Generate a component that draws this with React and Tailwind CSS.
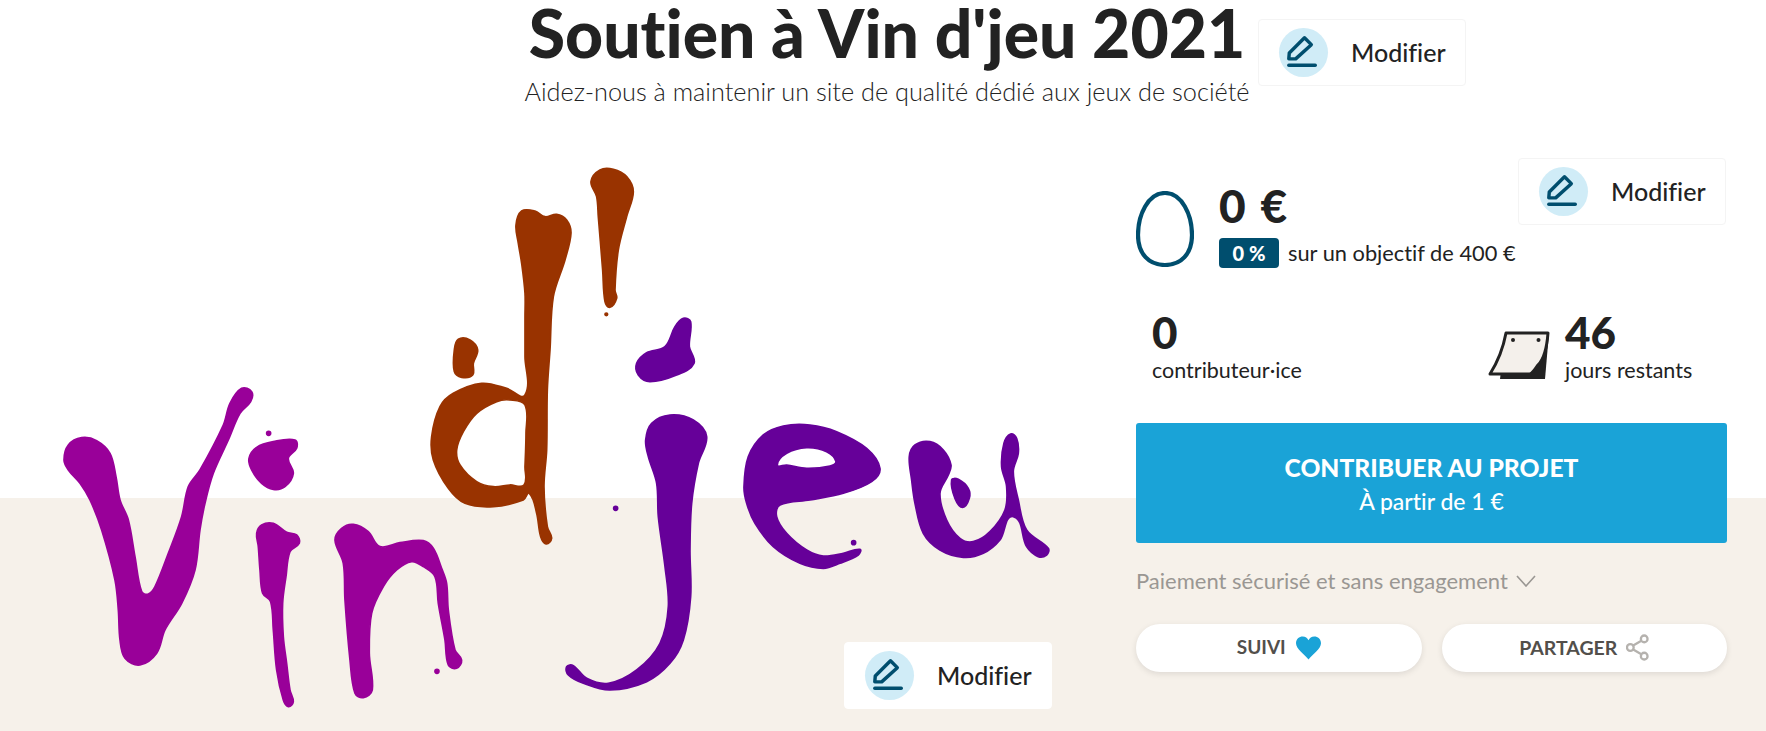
import React from 'react'

// closed smooth outline through a list of traced points
const smooth = (pts) => {
  const n = pts.length
  const tangent = (i) => {
    const a = pts[(i - 1 + n) % n]
    const b = pts[(i + 1) % n]
    const len = Math.hypot(b[0] - a[0], b[1] - a[1]) || 1
    return [(b[0] - a[0]) / len, (b[1] - a[1]) / len]
  }
  let d = `M${pts[0][0]} ${pts[0][1]}`
  for (let i = 0; i < n; i++) {
    const p1 = pts[i]
    const p2 = pts[(i + 1) % n]
    const t1 = tangent(i)
    const t2 = tangent((i + 1) % n)
    const h = Math.hypot(p2[0] - p1[0], p2[1] - p1[1]) / 3
    d += `C${(p1[0] + t1[0] * h).toFixed(1)} ${(p1[1] + t1[1] * h).toFixed(1)} ${(p2[0] - t2[0] * h).toFixed(1)} ${(p2[1] - t2[1] * h).toFixed(1)} ${p2[0]} ${p2[1]}`
  }
  return d + 'Z'
}

const letterV = [[72,270],[85,225],[125,203],[170,212],[210,250],[228,320],[240,390],[265,450],[285,560],[305,665],[325,672],[345,650],[385,550],[425,440],[445,350],[480,300],[550,165],[570,100],[605,55],[635,65],[632,95],[600,130],[565,210],[520,310],[495,400],[480,480],[465,600],[425,700],[375,780],[350,850],[300,885],[255,865],[240,810],[235,720],[225,630],[185,480],[150,390],[120,340],[85,300]]
const dotI = [[627,265],[650,232],[700,215],[765,210],[770,235],[745,265],[760,310],[735,350],[700,358],[665,340],[635,300]]
const letterI = [[650,490],[665,465],[700,460],[740,487],[770,495],[778,520],[750,545],[738,620],[728,700],[730,800],[740,880],[750,960],[760,995],[745,1010],[730,990],[710,900],[700,780],[692,695],[668,670],[660,600],[655,530]]
const letterN = [[885,510],[905,475],[940,463],[985,485],[1020,530],[1080,518],[1150,512],[1180,535],[1205,595],[1220,640],[1225,720],[1245,840],[1265,870],[1250,895],[1225,885],[1215,810],[1195,700],[1185,620],[1150,590],[1115,575],[1070,600],[1030,650],[995,730],[988,850],[997,960],[970,983],[945,970],[930,870],[915,690],[910,580]]

const apostrophe = [[543,95],[570,60],[610,58],[650,80],[670,125],[650,200],[625,300],[615,420],[620,445],[600,472],[585,455],[578,360],[565,200],[560,140]]
const letterD = [[318,225],[335,183],[375,183],[405,200],[440,193],[470,210],[483,250],[465,330],[430,440],[420,600],[412,720],[410,900],[402,1010],[412,1130],[425,1165],[408,1182],[392,1160],[380,1090],[358,1030],[340,1050],[250,1070],[165,1060],[115,1015],[70,930],[65,860],[90,770],[130,730],[215,700],[290,715],[345,735],[345,620],[345,500],[345,430],[335,340],[325,280]]
const holeD = [[345,765],[300,750],[260,755],[200,790],[160,845],[140,900],[150,945],[200,995],[250,1010],[300,1005],[342,1005],[345,950],[348,850]]
const dotD = [[133,600],[145,568],[180,570],[203,600],[190,640],[188,675],[155,682],[133,665]]
const dotJ = [[820,505],[842,515],[838,590],[852,640],[800,675],[720,695],[685,675],[680,640],[710,608],[765,590],[795,530]]

const letterJ = [[287,120],[305,70],[360,45],[430,60],[470,110],[445,190],[425,310],[420,450],[422,590],[400,720],[360,790],[290,845],[180,870],[100,850],[55,825],[50,800],[70,797],[110,835],[175,850],[260,810],[330,730],[355,620],[345,500],[325,350],[320,250],[295,170]]
const letterE = [[582,260],[595,170],[640,105],[700,78],[780,75],[860,95],[950,145],[990,205],[965,245],[880,280],[780,300],[690,315],[680,350],[710,400],[770,450],[820,468],[880,460],[930,448],[925,465],[870,490],[820,505],[750,490],[670,440],[615,370],[590,310]]
const holeE = [[682,195],[710,160],[770,143],[830,155],[858,185],[840,198],[770,205],[710,195]]
const letterU = [[1078,170],[1095,135],[1140,125],[1180,150],[1203,195],[1195,225],[1170,280],[1190,360],[1230,415],[1270,425],[1320,395],[1365,330],[1370,260],[1355,200],[1362,130],[1382,102],[1400,115],[1405,160],[1390,215],[1405,300],[1430,390],[1495,445],[1490,465],[1465,470],[1430,440],[1390,350],[1350,420],[1300,460],[1240,472],[1170,450],[1120,400],[1095,310],[1085,240]]
const blobU = [[1205,240],[1225,238],[1255,265],[1258,295],[1238,322],[1215,295]]

function Logo() {
  return (
    <svg viewBox="40 150 1020 570" className="block w-[1020px] h-[570px]">
      <g transform="translate(40 370) scale(0.3333)" fill="#990099" stroke="#990099" strokeWidth="5" strokeLinejoin="round">
        <path d={smooth(letterV)} />
        <path d={smooth(dotI)} />
        <path d={smooth(letterI)} />
        <path d={smooth(letterN)} />
        <circle cx="686" cy="190" r="6" />
        <circle cx="1191" cy="904" r="6" />
      </g>
      <g transform="translate(410 150) scale(0.3333)" strokeWidth="5" strokeLinejoin="round">
        <g fill="#993300" stroke="#993300">
          <path d={smooth(apostrophe)} />
          <path fillRule="evenodd" d={smooth(letterD) + smooth(holeD)} />
          <path d={smooth(dotD)} />
          <circle cx="589" cy="493" r="4" />
        </g>
        <g fill="#660099" stroke="#660099">
          <path d={smooth(dotJ)} />
          <circle cx="617" cy="1075" r="6" />
        </g>
      </g>
      <g transform="translate(550 400) scale(0.3333)" fill="#660099" stroke="#660099" strokeWidth="5" strokeLinejoin="round">
        <path d={smooth(letterJ)} />
        <path fillRule="evenodd" d={smooth(letterE) + smooth(holeE)} />
        <path d={smooth(letterU)} />
        <path d={smooth(blobU)} />
        <circle cx="911" cy="428" r="6" />
      </g>
    </svg>
  )
}

function EditButton({ className }) {
  return (
    <button className={`flex items-center h-[67px] w-[208px] pl-[20px] bg-white rounded border border-[#f4f4f4] ${className}`}>
      <span className="w-[49px] h-[49px] rounded-full bg-[#d0ecf7] flex items-center justify-center shrink-0">
        <svg viewBox="0 0 50 50" className="w-[49px] h-[49px]" fill="none" stroke="#004e6e" strokeWidth="3.5" strokeLinejoin="round" strokeLinecap="round">
          <path d="M10 31.5 L10.5 25.5 L26 10 L33 17 L17 31.5 Z" />
          <path d="M10 38 H37" />
        </svg>
      </span>
      <span className="ml-[23px] text-[25px] font-medium text-[#222]">Modifier</span>
    </button>
  )
}

function Calendar() {
  return (
    <svg viewBox="0 0 62 49" className="w-[62px] h-[49px] shrink-0 mb-[5px]">
      <path d="M18 2 H61 L57 48 H12 Z" fill="#222" />
      <path d="M18 2 H60 C59 15 56 28 50 34 C47 38 45 42 42 43 H2 C9 32 15 18 18 2 Z" fill="#f4f0eb" stroke="#222" strokeWidth="3" strokeLinejoin="round" />
      <circle cx="25" cy="9" r="2" fill="#222" />
      <circle cx="50.5" cy="9" r="2" fill="#222" />
    </svg>
  )
}

export default function App() {
  return (
    <div className="w-[1766px] h-[731px] overflow-hidden bg-white text-[#222] font-['Lato','Liberation_Sans',sans-serif] [font-variant-ligatures:none]">
      <header className="h-[120px] flex">
        <div className="ml-[520px] w-[734px] text-center shrink-0">
          <h1 className="text-[66px] leading-[66px] font-black whitespace-nowrap">Soutien à Vin d'jeu 2021</h1>
          <p className="text-[25.3px] leading-[32px] mt-[9px] font-light whitespace-nowrap">Aidez-nous à maintenir un site de qualité dédié aux jeux de société</p>
        </div>
        <EditButton className="ml-[4px] mt-[19px]" />
      </header>

      <main className="h-[611px] flex bg-[linear-gradient(to_bottom,#ffffff_378px,#f6f1ea_378px)]">
        <div className="relative w-[1136px] shrink-0 pt-[30px] pl-[40px]">
          <Logo />
          <EditButton className="absolute left-[844px] top-[522px] border-white" />
        </div>

        <div className="relative w-[591px] shrink-0 pt-[71px]">
          <EditButton className="absolute right-[1px] top-[38px]" />

          <div className="flex">
            <svg viewBox="0 0 58 76" className="w-[58px] h-[76px] shrink-0" fill="none" stroke="#004e6e" strokeWidth="4.2">
              <path d="M29 2 C46 2 56 24 56 44 C56 63 45 74 29 74 C13 74 2 63 2 44 C2 24 12 2 29 2 Z" />
            </svg>
            <div className="ml-[25px]">
              <div className="text-[46px] leading-[29px] font-black tracking-[2px]">0 €</div>
              <div className="flex items-center mt-[17px]">
                <span className="w-[60px] h-[30px] bg-[#004e6e] rounded-sm text-white text-[20px] font-black flex items-center justify-center">0 %</span>
                <span className="ml-[9px] text-[21.8px]">sur un objectif de 400 €</span>
              </div>
            </div>
          </div>

          <div className="flex mt-[40px] h-[75px]">
            <div className="ml-[16px] w-[336px]">
              <div className="text-[44px] leading-[44px] font-black">0</div>
              <div className="text-[21.5px] leading-[28px] mt-[2px]">contributeur·ice</div>
            </div>
            <div className="flex items-end">
              <Calendar />
              <div className="ml-[15px] self-start">
                <div className="text-[44px] leading-[44px] font-black">46</div>
                <div className="text-[21.5px] leading-[28px] mt-[2px]">jours restants</div>
              </div>
            </div>
          </div>

          <button className="block w-[591px] h-[120px] mt-[38px] rounded-[3px] bg-[#1aa3d7] text-white text-center">
            <div className="text-[24.6px] leading-[34px] font-black">CONTRIBUER AU PROJET</div>
            <div className="text-[23px] leading-[28px] font-medium mt-[2px]">À partir de 1 €</div>
          </button>

          <div className="flex items-center mt-[23px] text-[22px] leading-[30px] text-[#9a9793]">
            <span>Paiement sécurisé et sans engagement</span>
            <svg viewBox="0 0 20 12" className="w-[20px] h-[12px] ml-[8px]" fill="none" stroke="#9a9793" strokeWidth="1.6">
              <path d="M1 1 L10 11 L19 1" />
            </svg>
          </div>

          <div className="grid grid-cols-2 gap-[20px] mt-[28px]">
            <button className="h-[48px] rounded-full bg-white shadow-[0_2px_6px_rgba(0,0,0,0.1)] flex items-center justify-center text-[19px] font-bold text-[#524f4b]">
              SUIVI
              <svg viewBox="0 0 24 22" className="w-[25px] h-[24px] ml-[10px]" fill="#1aa3d7">
                <path d="M12 22 C8 17 0 12 0 6.5 C0 2.5 3 0 6.5 0 C9 0 11 1.5 12 3.5 C13 1.5 15 0 17.5 0 C21 0 24 2.5 24 6.5 C24 12 16 17 12 22 Z" />
              </svg>
            </button>
            <button className="h-[48px] rounded-full bg-white shadow-[0_2px_6px_rgba(0,0,0,0.1)] flex items-center justify-center text-[19.5px] font-bold text-[#524f4b]">
              PARTAGER
              <svg viewBox="0 0 24 28" className="w-[23px] h-[27px] ml-[9px]" fill="none" stroke="#b5b2ae" strokeWidth="2.4">
                <circle cx="4.5" cy="14" r="3.5" />
                <circle cx="19" cy="5" r="3.5" />
                <circle cx="19" cy="23" r="3.5" />
                <path d="M7.5 12 L16 7 M7.5 16 L16 21" />
              </svg>
            </button>
          </div>
        </div>
      </main>
    </div>
  )
}
